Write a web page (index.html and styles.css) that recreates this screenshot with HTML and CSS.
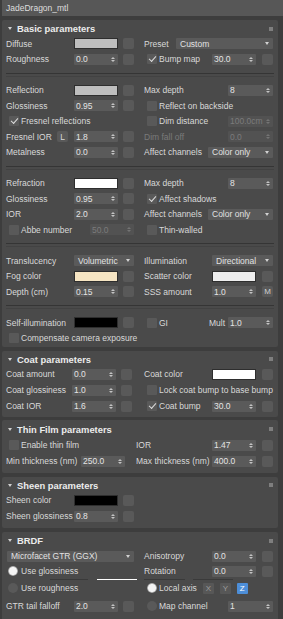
FILE: index.html
```html
<!DOCTYPE html>
<html>
    <head>
        <link rel="stylesheet" href="styles.css">
    </head>
    <body>
        <div class="title">JadeDragon_mtl</div>

        <div class="panel basic">
            <div class="hd">Basic parameters<i class="grip"></i></div>
            <div class="row">
                <div class="l"><span class="lab">Diffuse</span><i class="sw grey"></i><i class="mb"></i></div>
                <div class="r"><span class="lab">Preset</span><span class="dd push w97">Custom</span></div>
            </div>
            <div class="row">
                <div class="l"><span class="lab">Roughness</span><span class="spin"><span>0.0</span><i class="ar"></i></span><i class="mb"></i></div>
                <div class="r"><i class="cb on"></i><span>Bump map</span><span class="spin push"><span>30.0</span><i class="ar"></i></span><i class="mb"></i></div>
            </div>
            <div class="sep"></div>
            <div class="row">
                <div class="l"><span class="lab">Reflection</span><i class="sw grey"></i><i class="mb"></i></div>
                <div class="r"><span class="lab">Max depth</span><span class="spin push w45"><span>8</span><i class="ar"></i></span></div>
            </div>
            <div class="row">
                <div class="l"><span class="lab">Glossiness</span><span class="spin"><span>0.95</span><i class="ar"></i></span><i class="mb"></i></div>
                <div class="r"><i class="cb"></i><span>Reflect on backside</span></div>
            </div>
            <div class="row">
                <div class="l"><i class="cb on"></i><span>Fresnel reflections</span></div>
                <div class="r"><i class="cb"></i><span>Dim distance</span><span class="spin dis push w45"><span>100.0cm</span><i class="ar"></i></span></div>
            </div>
            <div class="row">
                <div class="l"><span class="lab">Fresnel IOR<b class="lbtn">L</b></span><span class="spin"><span>1.8</span><i class="ar"></i></span><i class="mb"></i></div>
                <div class="r"><span class="lab dim">Dim fall off</span><span class="spin dis push w45"><span>0.0</span><i class="ar"></i></span></div>
            </div>
            <div class="row">
                <div class="l"><span class="lab">Metalness</span><span class="spin"><span>0.0</span><i class="ar"></i></span><i class="mb"></i></div>
                <div class="r"><span class="lab">Affect channels</span><span class="dd push w65">Color only</span></div>
            </div>
            <div class="sep"></div>
            <div class="row">
                <div class="l"><span class="lab">Refraction</span><i class="sw white"></i><i class="mb"></i></div>
                <div class="r"><span class="lab">Max depth</span><span class="spin push w45"><span>8</span><i class="ar"></i></span></div>
            </div>
            <div class="row">
                <div class="l"><span class="lab">Glossiness</span><span class="spin"><span>0.95</span><i class="ar"></i></span><i class="mb"></i></div>
                <div class="r"><i class="cb on"></i><span>Affect shadows</span></div>
            </div>
            <div class="row">
                <div class="l"><span class="lab">IOR</span><span class="spin"><span>2.0</span><i class="ar"></i></span><i class="mb"></i></div>
                <div class="r"><span class="lab">Affect channels</span><span class="dd push w65">Color only</span></div>
            </div>
            <div class="row">
                <div class="l"><i class="cb"></i><span>Abbe number</span><span class="spin dis push"><span>50.0</span><i class="ar"></i></span></div>
                <div class="r"><i class="cb"></i><span>Thin-walled</span></div>
            </div>
            <div class="sep"></div>
            <div class="row">
                <div class="l"><span class="lab">Translucency</span><span class="dd w60">Volumetric</span></div>
                <div class="r"><span class="lab">Illumination</span><span class="dd push w61">Directional</span></div>
            </div>
            <div class="row">
                <div class="l"><span class="lab">Fog color</span><i class="sw cream"></i><i class="mb"></i></div>
                <div class="r"><span class="lab">Scatter color</span><i class="sw pale push"></i><i class="mb"></i></div>
            </div>
            <div class="row">
                <div class="l"><span class="lab">Depth (cm)</span><span class="spin"><span>0.15</span><i class="ar"></i></span><i class="mb"></i></div>
                <div class="r"><span class="lab">SSS amount</span><span class="spin push"><span>1.0</span><i class="ar"></i></span><i class="mb">M</i></div>
            </div>
            <div class="sep"></div>
            <div class="row">
                <div class="l"><span class="lab">Self-illumination</span><i class="sw black"></i><i class="mb"></i></div>
                <div class="r"><i class="cb"></i><span>GI</span><span class="push mult">Mult</span><span class="spin w45"><span>1.0</span><i class="ar"></i></span></div>
            </div>
            <div class="row">
                <div class="l"><i class="cb"></i><span>Compensate camera exposure</span></div>
                <div class="r"></div>
            </div>
        </div>

        <div class="panel coat">
            <div class="hd">Coat parameters<i class="grip"></i></div>
            <div class="row">
                <div class="l"><span class="lab">Coat amount</span><span class="spin"><span>0.0</span><i class="ar"></i></span><i class="mb"></i></div>
                <div class="r"><span class="lab">Coat color</span><i class="sw white push"></i><i class="mb"></i></div>
            </div>
            <div class="row">
                <div class="l"><span class="lab">Coat glossiness</span><span class="spin"><span>1.0</span><i class="ar"></i></span><i class="mb"></i></div>
                <div class="r"><i class="cb"></i><span>Lock coat bump to base bump</span></div>
            </div>
            <div class="row">
                <div class="l"><span class="lab">Coat IOR</span><span class="spin"><span>1.6</span><i class="ar"></i></span><i class="mb"></i></div>
                <div class="r"><i class="cb on"></i><span>Coat bump</span><span class="spin push"><span>30.0</span><i class="ar"></i></span><i class="mb"></i></div>
            </div>
        </div>

        <div class="panel thin">
            <div class="hd">Thin Film parameters<i class="grip"></i></div>
            <div class="row">
                <div class="l"><i class="cb"></i><span>Enable thin film</span></div>
                <div class="r"><span class="lab">IOR</span><span class="spin push"><span>1.47</span><i class="ar"></i></span><i class="mb"></i></div>
            </div>
            <div class="row">
                <div class="l"><span class="lab">Min thickness (nm)</span><span class="spin"><span>250.0</span><i class="ar"></i></span></div>
                <div class="r"><span class="lab">Max thickness (nm)</span><span class="spin push"><span>400.0</span><i class="ar"></i></span><i class="mb"></i></div>
            </div>
        </div>

        <div class="panel sheen">
            <div class="hd">Sheen parameters<i class="grip"></i></div>
            <div class="row">
                <div class="l"><span class="lab">Sheen color</span><i class="sw black"></i><i class="mb"></i></div>
                <div class="r"></div>
            </div>
            <div class="row">
                <div class="l"><span class="lab">Sheen glossiness</span><span class="spin"><span>0.8</span><i class="ar"></i></span><i class="mb"></i></div>
                <div class="r"></div>
            </div>
        </div>

        <div class="panel brdf">
            <div class="hd">BRDF<i class="grip"></i></div>
            <div class="row">
                <div class="l"><span class="dd w127">Microfacet GTR (GGX)</span></div>
                <div class="r"><span class="lab">Anisotropy</span><span class="spin push"><span>0.0</span><i class="ar"></i></span><i class="mb"></i></div>
            </div>
            <div class="row r2">
                <div class="l"><i class="rb on"></i><span>Use glossiness</span></div>
                <div class="r"><span class="lab">Rotation</span><span class="spin push"><span>0.0</span><i class="ar"></i></span><i class="mb"></i></div>
            </div>
            <div class="lines">
                <i class="ln a"></i><i class="ln b"></i><i class="ln c"></i><i class="ln d"></i>
            </div>
            <div class="row">
                <div class="l"><i class="rb"></i><span>Use roughness</span></div>
                <div class="r"><i class="rb on"></i><span>Local axis</span><b class="ax push">X</b><b class="ax">Y</b><b class="ax on">Z</b></div>
            </div>
            <div class="row r4">
                <div class="l"><span class="lab">GTR tail falloff</span><span class="spin"><span>2.0</span><i class="ar"></i></span><i class="mb"></i></div>
                <div class="r"><i class="rb"></i><span>Map channel</span><span class="spin push w45"><span>1</span><i class="ar"></i></span></div>
            </div>
        </div>
    </body>
</html>
```

FILE: styles.css
```css
* {
    box-sizing: border-box;
}

body {
    margin: 0;
    width: 283px;
    height: 619px;
    overflow: hidden;
    background: #3d3d3d;
    font-family: "Liberation Sans", Arial, sans-serif;
    font-size: 8.5px;
    color: #d9d9d9;
}

i, b {
    font-style: normal;
    font-weight: normal;
}

.title {
    height: 16px;
    margin-left: 2px;
    padding-left: 4px;
    background: #575757;
    color: #dedede;
    font-size: 8.5px;
    line-height: 16px;
}

.panel {
    width: 276px;
    margin: 4px 0 0 2px;
    background: #4a4a4a;
    border-radius: 2px;
}

.hd {
    height: 16px;
    display: flex;
    align-items: center;
    padding: 1px 5px 0 6px;
    font-weight: bold;
    font-size: 9.4px;
    color: #ececec;
}

.hd::before {
    content: "";
    border-left: 2px solid transparent;
    border-right: 2px solid transparent;
    border-top: 3px solid #cfcfcf;
    margin-right: 5px;
}

.grip {
    margin-left: auto;
    width: 4px;
    height: 4px;
    background: radial-gradient(circle, #808080 0.7px, transparent 0.9px) 0 0 / 2px 2px;
}

.row {
    display: flex;
    height: 16px;
    white-space: nowrap;
}

.basic {
    padding-bottom: 1px;
}
.basic .row, .basic .sep {
    height: 15.5px;
}

.l, .r {
    display: flex;
    align-items: center;
}

.l {
    width: 139px;
    flex: none;
    padding: 0 7px 0 4px;
}

.r {
    flex: 1;
    padding: 0 5px 0 3px;
}

.lab {
    width: 68px;
    flex: none;
    display: flex;
    align-items: center;
}

.r .lab {
    width: auto;
}

.push {
    margin-left: auto;
}

.dim {
    color: #7a7a7a;
}

.sep {
    display: flex;
    align-items: center;
    padding: 0 4px;
}

.sep::before {
    content: "";
    flex: 1;
    height: 2px;
    border-top: 1px solid #353535;
    border-bottom: 1px solid #424242;
}

/* controls */
.spin {
    width: 44px;
    height: 11px;
    flex: none;
    display: flex;
    align-items: center;
    padding: 0 3px 0 2px;
    background: #5a5a5a;
    border-radius: 1px;
    color: #e4e4e4;
}

.spin span {
    flex: 1;
}

.ar {
    display: flex;
    flex-direction: column;
    gap: 1px;
}

.ar::before, .ar::after {
    content: "";
    border-left: 2px solid transparent;
    border-right: 2px solid transparent;
}

.ar::before {
    border-bottom: 2.5px solid #c4c4c4;
}

.ar::after {
    border-top: 2.5px solid #c4c4c4;
}

.spin.dis {
    background: #525252;
    color: #7b7b7b;
}

.spin.dis .ar::before {
    border-bottom-color: #747474;
}

.spin.dis .ar::after {
    border-top-color: #747474;
}

.w45 {
    width: 45px;
}

.mb {
    width: 11px;
    height: 11px;
    flex: none;
    margin-left: 5px;
    background: #595959;
    border-radius: 2px;
    display: flex;
    align-items: center;
    justify-content: center;
    font-size: 8px;
    color: #d0d0d0;
}

.r .mb {
    margin-left: 6px;
}

.sw {
    width: 44px;
    height: 11px;
    flex: none;
    border: 1px solid #2e2e2e;
}

.grey { background: #bebebe; }
.white { background: #ffffff; }
.cream { background: #f6e5c3; }
.pale { background: #eeeeee; }
.black { background: #000000; }

.dd {
    height: 11px;
    flex: none;
    display: flex;
    align-items: center;
    padding: 0 4px;
    background: #5a5a5a;
    border-radius: 1px;
    color: #e2e2e2;
}

.dd::after {
    content: "";
    margin-left: auto;
    border-left: 2.5px solid transparent;
    border-right: 2.5px solid transparent;
    border-top: 3px solid #d2d2d2;
}

.w97 { width: 97px; }
.w65 { width: 65px; }
.w60 { width: 60px; }
.w61 { width: 61px; }
.w127 { width: 127px; margin-left: 1px; }

.cb {
    width: 10px;
    height: 10px;
    flex: none;
    margin: 0 2px 0 3px;
    background: #595959;
    border-radius: 1px;
    display: flex;
    align-items: center;
    justify-content: center;
}

.cb.on::after {
    content: "";
    width: 6px;
    height: 3px;
    border-left: 1.5px solid #dcdcdc;
    border-bottom: 1.5px solid #dcdcdc;
    transform: translateY(-1px) rotate(-48deg);
}

.lbtn {
    margin: 0 6px 0 auto;
    width: 11px;
    height: 11px;
    background: #595959;
    border-radius: 2px;
    display: flex;
    align-items: center;
    justify-content: center;
    color: #d8d8d8;
}

.mult {
    margin-right: 3px;
}

/* coat, thin film */
.coat .lab {
    width: 66px;
}

.coat, .sheen {
    padding-bottom: 3px;
}
.coat .hd, .sheen .hd {
    height: 15px;
}

.thin {
    margin-top: 3px;
    padding-bottom: 4px;
}
.thin .hd {
    height: 17px;
}
.thin .l {
    width: 134px;
}
.thin .l .lab {
    width: 75px;
}
.thin .r {
    padding-left: 0;
}

.sheen {
    padding-bottom: 4px;
}

/* brdf */
.brdf {
    padding-bottom: 10px;
}

.brdf .r2 {
    height: 14px;
}

.brdf .r4 {
    height: 20px;
}

.lines {
    display: flex;
    align-items: center;
    height: 2px;
}

.ln {
    height: 1px;
    background: #3a3a3a;
}
.ln.a { margin-left: 48px; width: 38px; }
.ln.b { margin-left: 9px; width: 40px; background: #ffffff; }
.ln.c { margin-left: 7px; width: 41px; }
.ln.d { margin-left: 8px; width: 40px; }

.rb {
    width: 10px;
    height: 10px;
    flex: none;
    margin: 0 3px 0 2px;
    border-radius: 50%;
    background: #595959;
}

.r .rb {
    margin-left: 3px;
    margin-right: 2px;
}

.rb.on {
    background: radial-gradient(circle, #f4f4f4 50%, #9a9a9a 68%, #5e5e5e 100%);
}

.ax {
    width: 11px;
    height: 11px;
    flex: none;
    margin-left: 6px;
    background: #575757;
    border-radius: 1px;
    display: flex;
    align-items: center;
    justify-content: center;
    font-size: 8px;
    color: #9c9c9c;
}

.ax.on {
    background: #4d8ed8;
    color: #ffffff;
}
```
